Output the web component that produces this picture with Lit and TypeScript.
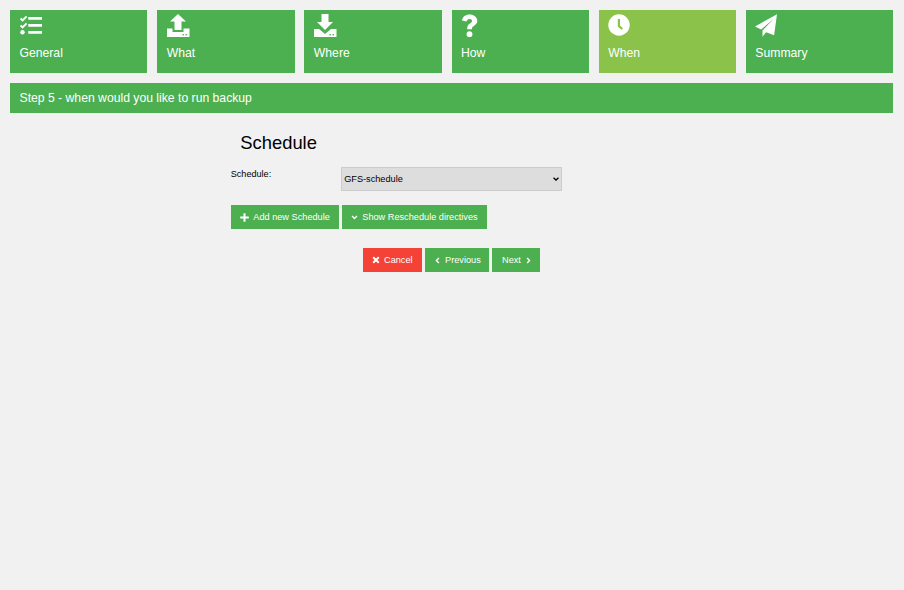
import { LitElement, html, css, svg } from "lit";
import { customElement } from "lit/decorators.js";

const ICONS: Record<string, unknown> = {
  general: svg`<svg class="ico" viewBox="0 0 24 24" width="24" height="24"><path fill="none" stroke="#fff" stroke-width="1.900" d="M.6 4.500l2 2 4-4.200 M.6 11.500l2 2 4-4.200"/><circle cx="2.500" cy="18.300" r="2.200" fill="#fff"/><path d="M8.300 3h13.700v2.800H8.300z M8.300 10h13.700v2.800H8.300z M8.300 17h13.700v2.800H8.300z" fill="#fff"/></svg>`,
  what: svg`<svg class="ico" viewBox="0 0 24 24" width="24" height="24"><path fill="#fff" fill-rule="evenodd" d="M11 0l8 7.500h-4.500V16h-7V7.500H3z M0 14.500h5.500v3.500h11v-3.500H22.500V23H0z"/><rect x="15.500" y="20" width="1.400" height="1.400" fill="#4CAF50"/><rect x="18.500" y="20" width="1.400" height="1.400" fill="#4CAF50"/></svg>`,
  where: svg`<svg class="ico" viewBox="0 0 24 24" width="24" height="24"><path fill="#fff" d="M7.500 0h7v8H19l-8 8-8-8h4.500z M0 15h5l6 5 6-5h5.500v8H0z"/><rect x="15.500" y="20" width="1.400" height="1.400" fill="#4CAF50"/><rect x="18.500" y="20" width="1.400" height="1.400" fill="#4CAF50"/></svg>`,
  how: svg`<svg class="ico" viewBox="0 0 24 24" width="24" height="24"><path fill="#fff" d="M1 6.500C1.500 2.500 4.500.400 8.500.400c4.300 0 7.800 2.500 7.800 6.300 0 2.600-1.500 3.900-3.200 5-1.500 1-2.100 1.500-2.100 3v.6H6.200v-1c0-2.700 1.200-3.800 2.800-4.900 1.200-.8 2-1.400 2-2.500 0-1.200-1.100-1.900-2.500-1.900-1.600 0-2.600.9-2.900 2.400z"/><circle cx="8.500" cy="20.200" r="2.900" fill="#fff"/></svg>`,
  when: svg`<svg class="ico" viewBox="0 0 24 24" width="24" height="24"><circle cx="11" cy="11" r="10.700" fill="#fff"/><path d="M9.800 5h2.200v6.500l3 2.700-1.500 1.500-3.700-3.300z" fill="#8BC34A"/></svg>`,
  summary: svg`<svg class="ico" viewBox="0 0 24 24" width="24" height="24"><path fill="#fff" d="M22 .200L0 12.500l6.200 2.900L18.500 5 7.500 16.600v6.200l3.600-4.500 8 3z"/></svg>`,
};

const PLUS = svg`<svg class="bi" viewBox="0 0 10 10" width="9" height="9"><path fill="#fff" d="M3.900.2h2.200v3.700h3.700v2.200H6.100v3.700H3.900V6.100H.2V3.900h3.700z"/></svg>`;
const DOWN = svg`<svg class="bi" viewBox="0 0 10 10" width="7" height="7"><path fill="none" stroke="#fff" stroke-width="2" d="M1.500 3l3.500 3.500L8.500 3"/></svg>`;
const CROSS = svg`<svg class="bi" viewBox="0 0 10 10" width="8" height="8"><path fill="none" stroke="#fff" stroke-width="2.400" d="M1.500 1.500l7 7m0-7l-7 7"/></svg>`;
const LEFT = svg`<svg class="bi" viewBox="0 0 10 10" width="7" height="7"><path fill="none" stroke="#fff" stroke-width="2" d="M7 1.500L3.500 5 7 8.500"/></svg>`;
const RIGHT = svg`<svg class="bi" viewBox="0 0 10 10" width="7" height="7"><path fill="none" stroke="#fff" stroke-width="2" d="M3 1.500L6.500 5 3 8.500"/></svg>`;
const ARROW = svg`<svg class="arrow" viewBox="0 0 6 4" width="6" height="4"><path fill="none" stroke="#000" stroke-width="1.300" d="M.5.700L3 3 5.500.7"/></svg>`;

const STEPS = [
  { key: "general", label: "General" },
  { key: "what", label: "What" },
  { key: "where", label: "Where" },
  { key: "how", label: "How" },
  { key: "when", label: "When", active: true },
  { key: "summary", label: "Summary" },
];

@customElement("app-root")
export class AppRoot extends LitElement {
  static styles = css`
    :host {
      display: block;
      min-height: 590px;
      background: #f1f1f1;
      font-family: "Liberation Sans", Arial, sans-serif;
      color: #000;
      padding: 10px 11px 0 10px;
      box-sizing: border-box;
    }
    .steps {
      display: grid;
      grid-template-columns: repeat(6, 1fr);
    }
    .cell {
      padding-right: 9.8px;
    }
    .cell:last-child {
      padding-right: 0;
    }
    .tile {
      height: 63px;
      background: #4caf50;
      color: #fff;
      padding: 4px 9.5px 0;
      box-sizing: border-box;
      font-size: 12.2px;
      line-height: 15px;
    }
    .tile.active {
      background: #8bc34a;
    }
    .ico {
      display: block;
    }
    .tile span {
      display: block;
      margin-top: 8px;
    }
    .bar {
      margin-top: 10px;
      height: 30px;
      line-height: 30px;
      background: #4caf50;
      color: #fff;
      font-size: 12.2px;
      padding-left: 9.5px;
    }
    .form {
      width: 50%;
      margin: 0 auto;
    }
    h2 {
      margin: 19px 0 0;
      padding-left: 9.5px;
      font-size: 18.4px;
      font-weight: 400;
      line-height: 22px;
    }
    .row {
      display: grid;
      grid-template-columns: 25% 50%;
      margin-top: 13px;
    }
    label {
      font-size: 9.1px;
      line-height: 14px;
    }
    .select-wrap {
      position: relative;
    }
    select {
      display: block;
      appearance: none;
      width: 100%;
      height: 24px;
      margin: 0;
      background: #ddd;
      border: 1px solid #ccc;
      border-radius: 0;
      font: 9.2px "Liberation Sans", Arial, sans-serif;
      color: #000;
      padding: 0 0 0 2px;
    }
    .arrow {
      position: absolute;
      right: 2.5px;
      top: 10px;
      pointer-events: none;
    }
    .actions {
      display: flex;
      gap: 3px;
      margin-top: 14px;
    }
    button {
      display: flex;
      align-items: center;
      height: 24px;
      padding: 0 0 0 9px;
      border: 0;
      background: #4caf50;
      color: #fff;
      font: 9.2px "Liberation Sans", Arial, sans-serif;
      white-space: nowrap;
      justify-content: flex-start;
      gap: 4px;
    }
    button.add { width: 108px; gap: 4.5px; }
    button.show { width: 145px; gap: 4.5px; }
    button.cancel { width: 59px; background: #f44336; }
    button.prev { width: 64px; }
    button.next { width: 48px; padding-left: 10px; }
    .bi {
      display: block;
      flex: none;
    }
    .footer {
      display: flex;
      justify-content: center;
      gap: 3px;
      margin-top: 19px;
    }
  `;

  render() {
    return html`
      <div class="steps">
        ${STEPS.map(
          (s) => html`<div class="cell">
            <div class="tile ${s.active ? "active" : ""}">
              ${ICONS[s.key]}
              <span>${s.label}</span>
            </div>
          </div>`
        )}
      </div>
      <div class="bar">Step 5 - when would you like to run backup</div>
      <div class="form">
        <h2>Schedule</h2>
        <div class="row">
          <label for="sched">Schedule:</label>
          <div class="select-wrap">
            <select id="sched"><option>GFS-schedule</option></select>
            ${ARROW}
          </div>
        </div>
        <div class="actions">
          <button class="add">${PLUS}Add new Schedule</button>
          <button class="show">${DOWN}Show Reschedule directives</button>
        </div>
      </div>
      <div class="footer">
        <button class="cancel">${CROSS}Cancel</button>
        <button class="prev">${LEFT}Previous</button>
        <button class="next">Next${RIGHT}</button>
      </div>
    `;
  }
}
